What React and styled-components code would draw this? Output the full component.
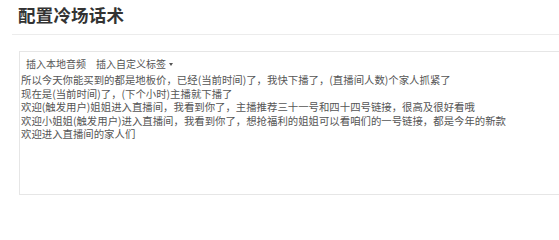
import React from "react";
import styled, { createGlobalStyle } from "styled-components";

const GlobalStyle = createGlobalStyle`
  html, body {
    margin: 0;
    padding: 0;
    background: #fff;
    overflow: hidden;
  }
  body {
    font-family: "Noto Sans CJK SC", "Noto Sans", sans-serif;
  }
`;

const Page = styled.div`
  width: 559px;
  height: 202px;
  overflow: hidden;
`;

const Header = styled.div`
  margin-left: 12px;
  height: 34px;
  border-bottom: 1px solid #ececec;
  display: flex;
  align-items: center;
`;

const Title = styled.h2`
  margin: 0 0 6px 6px;
  font-size: 17.5px;
  font-weight: 700;
  color: #333;
  letter-spacing: 0.2px;
`;

const Editor = styled.div`
  margin: 16px 0 0 19px;
  width: 600px;
  height: 144px;
  box-sizing: border-box;
  border: 1px solid #e6e6e6;
  padding: 5px 6px;
`;

const Toolbar = styled.div`
  display: flex;
  align-items: center;
  gap: 10px;
  font-size: 10px;
  line-height: 14px;
  color: #555;
`;

const ToolItem = styled.span`
  display: inline-flex;
  align-items: center;
  gap: 3px;
  cursor: pointer;
`;

const Caret = styled.span`
  display: inline-block;
  width: 0;
  height: 0;
  border-left: 2.5px solid transparent;
  border-right: 2.5px solid transparent;
  border-top: 3px solid #555;
`;

const Content = styled.div`
  margin-top: 2px;
  margin-left: -5px;
  font-size: 10.4px;
  line-height: 13.5px;
  color: #555;
`;

const Line = styled.div`
  white-space: nowrap;
`;

const lines = [
  "所以今天你能买到的都是地板价，已经(当前时间)了，我快下播了，(直播间人数)个家人抓紧了",
  "现在是(当前时间)了，(下个小时)主播就下播了",
  "欢迎(触发用户)姐姐进入直播间，我看到你了，主播推荐三十一号和四十四号链接，很高及很好看哦",
  "欢迎小姐姐(触发用户)进入直播间，我看到你了，想抢福利的姐姐可以看咱们的一号链接，都是今年的新款",
  "欢迎进入直播间的家人们",
];

export default function App() {
  return (
    <Page>
      <GlobalStyle />
      <Header>
        <Title>配置冷场话术</Title>
      </Header>
      <Editor>
        <Toolbar>
          <ToolItem>插入本地音频</ToolItem>
          <ToolItem>
            插入自定义标签
            <Caret />
          </ToolItem>
        </Toolbar>
        <Content>
          {lines.map((l, i) => (
            <Line key={i}>{l}</Line>
          ))}
        </Content>
      </Editor>
    </Page>
  );
}
